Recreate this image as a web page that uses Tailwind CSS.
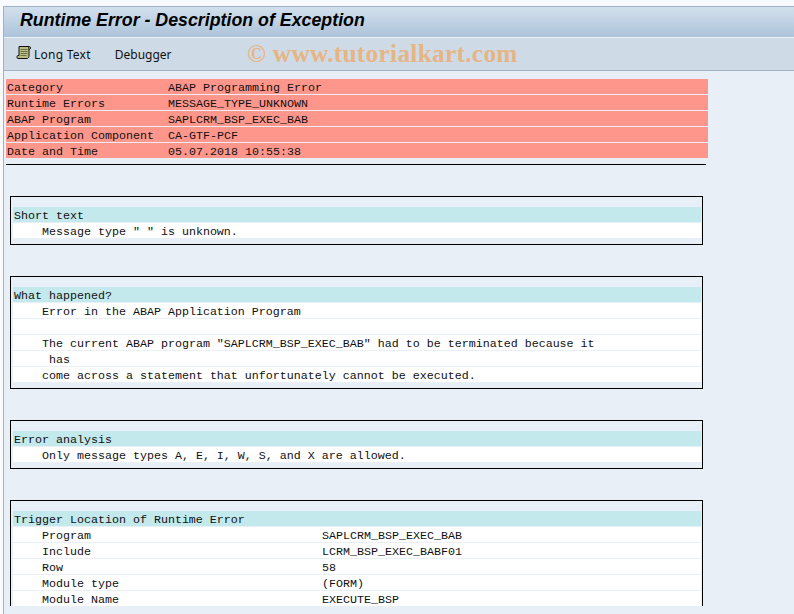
<!DOCTYPE html>
<html>
<head>
<meta charset="utf-8">
<script src="https://cdn.jsdelivr.net/npm/@tailwindcss/browser@4"></script>
</head>
<body class="w-[794px] h-[614px] overflow-hidden bg-[#f8fafd] font-['Liberation_Mono',monospace] text-[11.67px] leading-[18px] text-[#111]">
<div class="h-[6px]"></div>
<div class="ml-[3px] h-[608px] flex flex-col border-l border-t border-[#a3b1c7] bg-[#e8eff6]">
  <header class="h-[30px] shrink-0 bg-gradient-to-b from-[#d2e0ed] to-[#adc3da] flex items-center pl-[16px] pb-[4px]">
    <h1 class="font-['Liberation_Sans',sans-serif] italic font-bold text-[17.8px] leading-[20px] text-black">Runtime Error - Description of Exception</h1>
  </header>
  <div class="h-[34px] shrink-0 relative flex items-center border-t border-b border-t-[#eef3f8] border-b-[#a3b1c7] bg-[#cedbe6] font-['Noto_Sans',sans-serif] text-[12px] leading-[16px] text-[#111] pt-[1px]">
    <svg class="ml-[12px] mb-[3px]" width="16" height="16" viewBox="0 0 16 16"><path d="M3 1.500h10.500c1.300 0 1.300 2.800 0 3H13v6.500c0 1-.4 1.800-1.500 2.500H2c-1.300 0-1.500-2.600-.2-3H3z" fill="#b9bd82" stroke="#111" stroke-width="1"/><path d="M4.500 4.500h7M4.500 6.500h7M4.500 8.500h7M4.500 10.500h6" stroke="#6e7344" stroke-width="1"/><path d="M12 1.500c1 .2 1.200 2.500.3 3" fill="#e8e8b8" stroke="#111" stroke-width="1"/></svg>
    <span class="ml-[2px] tracking-[0.25px]">Long Text</span>
    <span class="ml-[24px]">Debugger</span>
    <span class="absolute left-[243px] top-[1px] font-['Liberation_Serif',serif] font-bold text-[25.3px] leading-[28px] tracking-[0.3px] text-[#e6b585]">© www.tutorialkart.com</span>
  </div>
  <main class="flex-1 min-h-0 overflow-hidden pl-[2px] pt-[8px]">
    <div class="w-[702px] flex flex-col gap-px">
      <div class="h-[15px] flex bg-[#ff968c] pl-px"><span class="w-[161px]">Category</span><span>ABAP Programming Error</span></div>
      <div class="h-[15px] flex bg-[#ff968c] pl-px"><span class="w-[161px]">Runtime Errors</span><span>MESSAGE_TYPE_UNKNOWN</span></div>
      <div class="h-[15px] flex bg-[#ff968c] pl-px"><span class="w-[161px]">ABAP Program</span><span>SAPLCRM_BSP_EXEC_BAB</span></div>
      <div class="h-[15px] flex bg-[#ff968c] pl-px"><span class="w-[161px]">Application Component</span><span>CA-GTF-PCF</span></div>
      <div class="h-[15px] flex bg-[#ff968c] pl-px"><span class="w-[161px]">Date and Time</span><span>05.07.2018 10:55:38</span></div>
    </div>
    <div class="w-[700px] h-px bg-black mt-[6px]"></div>

    <section class="ml-[4px] mt-[31px] w-[693px] border border-black pt-[10px] pb-[6px]">
      <div class="ml-[2px] mr-px flex flex-col gap-px">
        <div class="h-[15px] bg-[#c3e9ec] pl-px">Short text</div>
        <div class="h-[15px] bg-white pl-[29px]">Message type " " is unknown.</div>
      </div>
    </section>

    <section class="ml-[4px] mt-[31px] w-[693px] border border-black pt-[10px] pb-[6px]">
      <div class="ml-[2px] mr-px flex flex-col gap-px">
        <div class="h-[15px] bg-[#c3e9ec] pl-px">What happened?</div>
        <div class="h-[15px] bg-white pl-[29px]">Error in the ABAP Application Program</div>
        <div class="h-[15px] bg-white"></div>
        <div class="h-[15px] bg-white pl-[29px]">The current ABAP program "SAPLCRM_BSP_EXEC_BAB" had to be terminated because it</div>
        <div class="h-[15px] bg-white pl-[36px]">has</div>
        <div class="h-[15px] bg-white pl-[29px]">come across a statement that unfortunately cannot be executed.</div>
      </div>
    </section>

    <section class="ml-[4px] mt-[31px] w-[693px] border border-black pt-[10px] pb-[6px]">
      <div class="ml-[2px] mr-px flex flex-col gap-px">
        <div class="h-[15px] bg-[#c3e9ec] pl-px">Error analysis</div>
        <div class="h-[15px] bg-white pl-[29px]">Only message types A, E, I, W, S, and X are allowed.</div>
      </div>
    </section>

    <section class="ml-[4px] mt-[31px] w-[693px] h-[106px] overflow-hidden border border-b-0 border-black pt-[10px]">
      <div class="ml-[2px] mr-px flex flex-col gap-px">
        <div class="h-[15px] bg-[#c3e9ec] pl-px">Trigger Location of Runtime Error</div>
        <div class="h-[15px] flex bg-white pl-[29px]"><span class="w-[280px]">Program</span><span>SAPLCRM_BSP_EXEC_BAB</span></div>
        <div class="h-[15px] flex bg-white pl-[29px]"><span class="w-[280px]">Include</span><span>LCRM_BSP_EXEC_BABF01</span></div>
        <div class="h-[15px] flex bg-white pl-[29px]"><span class="w-[280px]">Row</span><span>58</span></div>
        <div class="h-[15px] flex bg-white pl-[29px]"><span class="w-[280px]">Module type</span><span>(FORM)</span></div>
        <div class="h-[15px] flex bg-white pl-[29px]"><span class="w-[280px]">Module Name</span><span>EXECUTE_BSP</span></div>
      </div>
    </section>
  </main>
</div>
</body>
</html>
